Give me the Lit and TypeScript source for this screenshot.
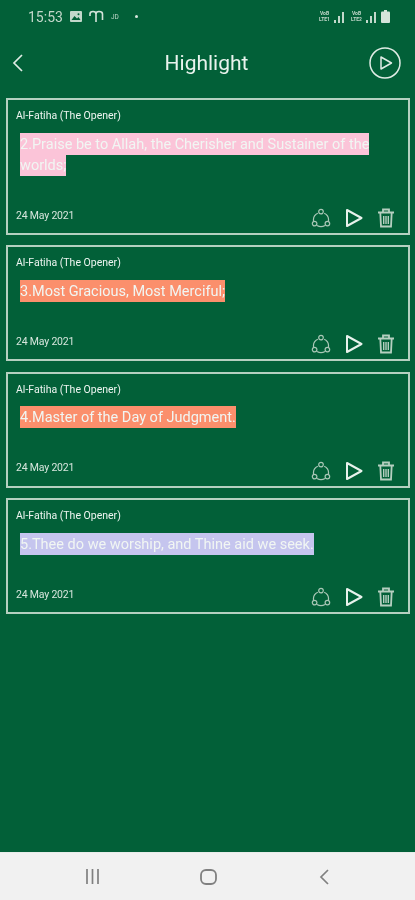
import { LitElement, html, css, svg } from "lit";
import { customElement } from "lit/decorators.js";

const items = [
  { text: "2.Praise be to Allah, the Cherisher and Sustainer of the worlds;", color: "#fbc4d8", tall: true },
  { text: "3.Most Gracious, Most Merciful;", color: "#fb8f6c", tall: false },
  { text: "4.Master of the Day of Judgment.", color: "#fb8f6c", tall: false },
  { text: "5.Thee do we worship, and Thine aid we seek.", color: "#c5c5ee", tall: false },
];

const shareIcon = svg`<svg class="ic" width="20" height="20" viewBox="0 0 20 20" fill="none" stroke="#a9c7b6" stroke-width="1.2">
  <circle cx="10" cy="3.6" r="2.3"/><circle cx="3.6" cy="15.6" r="2.3"/><circle cx="16.4" cy="15.6" r="2.3"/>
  <path d="M6.8 5.2A7.6 7.6 0 0 0 2.6 13.3M13.2 5.2A7.6 7.6 0 0 1 17.4 13.3M6 17.4A7.6 7.6 0 0 0 14 17.4"/>
</svg>`;
const playIcon = svg`<svg class="ic" width="18" height="20" viewBox="0 0 18 20" fill="none" stroke="#e8f2ec" stroke-width="2" stroke-linejoin="round">
  <path d="M2 2L16.5 10L2 18Z"/>
</svg>`;
const trashIcon = svg`<svg class="ic" width="18" height="20" viewBox="0 0 18 20" fill="none" stroke="#b5cfc0" stroke-width="1.8">
  <path d="M1 4.5H17M6 4V1.5H12V4M3.3 4.5L4 18.5H14L14.7 4.5"/>
  <path d="M6.7 8V16M9 8V16M11.3 8V16" stroke-width="1.4"/>
</svg>`;

@customElement("app-root")
export class AppRoot extends LitElement {
  static styles = css`
    :host { display: block; width: 415px; height: 900px; font-family: Roboto, "Liberation Sans", sans-serif; }
    .page { height: 900px; display: flex; flex-direction: column; background: #026038; color: #fff; filter: blur(0.35px); }
    .status { height: 33px; box-sizing: border-box; padding: 0 25px 0 28px; display: flex; align-items: center; justify-content: space-between; color: #c3d8cb; }
    .status-left { display: flex; align-items: center; gap: 7px; font-size: 14px; }
    .status-right { display: flex; align-items: center; gap: 2px; }
    .small { font-size: 6.5px; }
    .dot { width: 3px; height: 3px; border-radius: 50%; background: #d8e6dd; margin-left: 9px; }
    .bars { font-size: 5px; line-height: 5.5px; width: 15px; text-align: center; font-weight: 700; }
    .sig { margin-right: 3px; }
    .header { height: 62px; box-sizing: border-box; padding: 0 14px 2px 12px; display: grid; grid-template-columns: 1fr auto 1fr; align-items: center; }
    .header .end { justify-self: end; }
    .title { font-size: 21px; color: #e9f3ed; }
    .list { flex: 1; display: flex; flex-direction: column; gap: 10.4px; padding: 3px 5px 0 6px; }
    .card { height: 116px; box-sizing: border-box; border: 2px solid #b5d0c0; padding: 9px 8px 0 8px; display: flex; flex-direction: column; }
    .card.tall { height: 137px; }
    .surah { font-size: 10.5px; line-height: 14px; color: #eef5f1; }
    .verse { margin: 10px 0 0 4px; font-size: 14.5px; line-height: 21px; height: 42px; color: #f1f6f3; }
    .card:not(.tall) .verse { height: 21px; }
    .verse span { -webkit-box-decoration-break: clone; box-decoration-break: clone; padding: 2.5px 0; }
    .foot { margin-top: auto; height: 30px; display: flex; align-items: center; justify-content: space-between; }
    .date { font-size: 10.5px; color: #d7e6dd; letter-spacing: -0.2px; margin-bottom: 6px; }
    .actions { display: flex; align-items: center; gap: 14px; padding-right: 5px; }
    .ic { display: block; }
    .nav { height: 47px; border-top: 1px solid #e8ecea; background: #f1f1f1; display: grid; grid-template-columns: repeat(3, 116px); justify-content: center; justify-items: center; align-items: center; padding-left: 1px; }
  `;

  render() {
    return html`<div class="page">
      <div class="status">
        <div class="status-left">
          <span>15:53</span>
          <svg width="12" height="11" viewBox="0 0 12 11"><rect width="12" height="11" rx="1" fill="#c3d8cb"/><path d="M1.5 9L4.5 5L7 7.5L8.5 6L10.5 9Z" fill="#026038"/><circle cx="8.5" cy="3.2" r="1" fill="#026038"/></svg>
          <svg width="15" height="13" viewBox="0 0 15 13" fill="none" stroke="#d5e4db" stroke-width="1.6"><path d="M1 6V4Q1 1.5 4 1.5Q7 1.5 7 4V12M7 4Q7 1.5 10 1.5Q13.5 1.5 13.5 4V10"/></svg>
          <span class="small">JD</span>
          <span class="dot"></span>
        </div>
        <div class="status-right">
          <span class="bars">VoB<br />LTE1</span>
          <svg class="sig" width="10" height="12" viewBox="0 0 10 12" fill="#c3d8cb"><rect x="0" y="9" width="2" height="3"/><rect x="4" y="5" width="2" height="7"/><rect x="8" y="1" width="2" height="11"/></svg>
          <span class="bars">VoB<br />LTE2</span>
          <svg class="sig" width="10" height="12" viewBox="0 0 10 12" fill="#c3d8cb"><rect x="0" y="9" width="2" height="3"/><rect x="4" y="5" width="2" height="7"/><rect x="8" y="1" width="2" height="11"/></svg>
          <svg width="9" height="13" viewBox="0 0 9 13" fill="#d5e4db"><rect x="0" y="1.5" width="9" height="11.5" rx="1"/><rect x="3" y="0" width="3" height="2"/></svg>
        </div>
      </div>
      <div class="header">
        <svg width="12" height="20" viewBox="0 0 12 20" fill="none" stroke="#e0ece5" stroke-width="1.7"><path d="M10 2L2 10L10 18"/></svg>
        <div class="title">Highlight</div>
        <svg class="end" width="32" height="32" viewBox="0 0 32 32" fill="none" stroke="#e0ece5" stroke-width="1.5" stroke-linejoin="round"><circle cx="16" cy="16" r="15"/><path d="M12 10L22.5 16L12 22Z"/></svg>
      </div>
      <div class="list">
        ${items.map(
          (it) => html`<div class="card ${it.tall ? "tall" : ""}">
            <div class="surah">Al-Fatiha (The Opener)</div>
            <div class="verse"><span style="background:${it.color}">${it.text}</span></div>
            <div class="foot">
              <span class="date">24 May 2021</span>
              <div class="actions">${shareIcon}${playIcon}${trashIcon}</div>
            </div>
          </div>`
        )}
      </div>
      <div class="nav">
        <svg width="15" height="15" viewBox="0 0 15 15" stroke="#808080" stroke-width="1.7"><path d="M2 0V15M7.5 0V15M13 0V15"/></svg>
        <svg width="17" height="16" viewBox="0 0 17 16" fill="none" stroke="#808080" stroke-width="1.8"><rect x="1" y="1" width="15" height="14" rx="5"/></svg>
        <svg width="10" height="16" viewBox="0 0 10 16" fill="none" stroke="#808080" stroke-width="1.7"><path d="M9 1L2 8L9 15"/></svg>
      </div>
    </div>`;
  }
}
